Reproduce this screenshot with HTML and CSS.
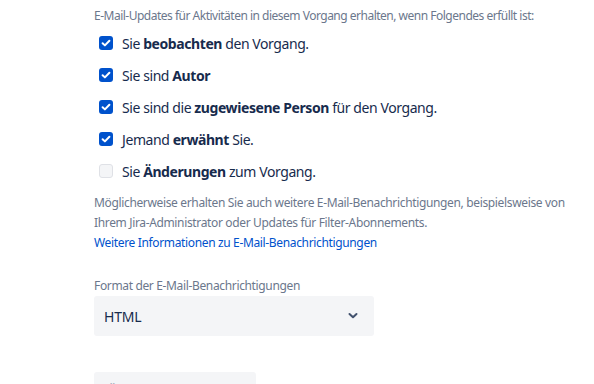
FILE: index.html
```html
<!DOCTYPE html>
<html lang="de">
<head>
<meta charset="utf-8">
<link rel="stylesheet" href="styles.css">
</head>
<body>
<div class="page">
  <p class="intro">E-Mail-Updates für Aktivitäten in diesem Vorgang erhalten, wenn Folgendes erfüllt ist:</p>
  <ul class="checks">
    <li class="row"><span class="cb on"><svg viewBox="0 0 14 14" width="14" height="14"><path d="M3.6 7.2l2.3 2.2 4.5-4.6" fill="none" stroke="#fff" stroke-width="2" stroke-linecap="round" stroke-linejoin="round"/></svg></span><span>Sie <b>beobachten</b> den Vorgang.</span></li>
    <li class="row"><span class="cb on"><svg viewBox="0 0 14 14" width="14" height="14"><path d="M3.6 7.2l2.3 2.2 4.5-4.6" fill="none" stroke="#fff" stroke-width="2" stroke-linecap="round" stroke-linejoin="round"/></svg></span><span>Sie sind <b>Autor</b></span></li>
    <li class="row"><span class="cb on"><svg viewBox="0 0 14 14" width="14" height="14"><path d="M3.6 7.2l2.3 2.2 4.5-4.6" fill="none" stroke="#fff" stroke-width="2" stroke-linecap="round" stroke-linejoin="round"/></svg></span><span>Sie sind die <b>zugewiesene Person</b> für den Vorgang.</span></li>
    <li class="row"><span class="cb on"><svg viewBox="0 0 14 14" width="14" height="14"><path d="M3.6 7.2l2.3 2.2 4.5-4.6" fill="none" stroke="#fff" stroke-width="2" stroke-linecap="round" stroke-linejoin="round"/></svg></span><span>Jemand <b>erwähnt</b> Sie.</span></li>
    <li class="row"><span class="cb off"></span><span>Sie <b>Änderungen</b> zum Vorgang.</span></li>
  </ul>
  <p class="note">Möglicherweise erhalten Sie auch weitere E-Mail-Benachrichtigungen, beispielsweise von Ihrem Jira-Administrator oder Updates für Filter-Abonnements.<br><a class="link" href="#">Weitere Informationen zu E-Mail-Benachrichtigungen</a></p>
  <div class="field-label">Format der E-Mail-Benachrichtigungen</div>
  <div class="select">
    <span>HTML</span>
    <svg class="chev" viewBox="0 0 10 8" width="10" height="8"><path d="M1.5 2l3.5 3.3L8.5 2" fill="none" stroke="#42526E" stroke-width="2" stroke-linecap="round" stroke-linejoin="round"/></svg>
  </div>
  <div class="button"><span>Änderungen speichern</span></div>
</div>
</body>
</html>
```

FILE: styles.css
```css
html, body {
  margin: 0;
  padding: 0;
  background: #fff;
  overflow: hidden;
}
body {
  font-family: "Segoe UI", "Noto Sans", "Open Sans", sans-serif;
  color: #172B4D;
}
.page {
  padding: 6px 0 0 94px;
  width: 480px;
}
.intro {
  margin: 0;
  font-size: 12px;
  line-height: 20px;
  letter-spacing: -0.5px;
  color: #6B778C;
  white-space: nowrap;
}
.checks {
  list-style: none;
  margin: 1px 0 0 0;
  padding: 0;
}
.row {
  display: flex;
  align-items: center;
  height: 32px;
  font-size: 14px;
  letter-spacing: -0.42px;
  gap: 9px;
  padding-left: 5px;
}
.row b {
  font-weight: 700;
}
.cb {
  width: 14px;
  height: 14px;
  border-radius: 3px;
  box-sizing: border-box;
  flex: none;
  display: flex;
}
.cb.on {
  background: #0052CC;
}
.cb.off {
  background: #F4F5F7;
  border: 1.5px solid #DFE1E6;
}
.note {
  margin: 6px 0 0 0;
  font-size: 12px;
  line-height: 20px;
  letter-spacing: -0.35px;
  color: #6B778C;
}
.link {
  color: #0052CC;
  text-decoration: none;
}
.field-label {
  margin-top: 23px;
  font-size: 12px;
  line-height: 20px;
  letter-spacing: -0.35px;
  color: #6B778C;
}
.select {
  margin-top: 0;
  width: 280px;
  height: 40px;
  box-sizing: border-box;
  background: #F4F5F7;
  border-radius: 3px;
  display: flex;
  align-items: center;
  justify-content: space-between;
  padding: 0 16px 0 10px;
  font-size: 14px;
  letter-spacing: -0.2px;
  color: #172B4D;
}
.chev {
  display: block;
}
.button {
  margin-top: 36px;
  width: 162px;
  height: 40px;
  background: #F4F5F7;
  border-radius: 3px;
  display: flex;
  align-items: flex-start;
  padding: 9px 0 0 14px;
  box-sizing: border-box;
  font-size: 14px;
  line-height: 20px;
  color: #A5ADBA;
}
```
